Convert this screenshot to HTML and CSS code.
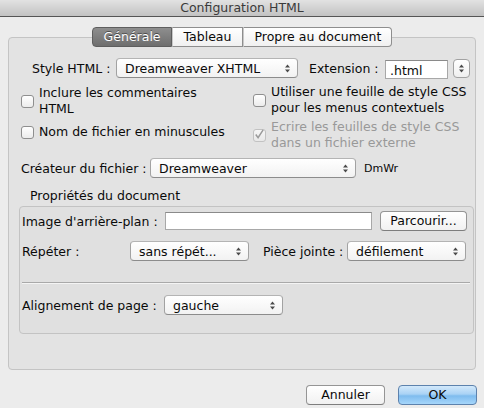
FILE: index.html
```html
<!DOCTYPE html>
<html lang="fr">
<head>
<meta charset="utf-8">
<title>Configuration HTML</title>
<link rel="stylesheet" href="styles.css">
</head>
<body>
<div class="titlebar">Configuration HTML</div>
<div class="content">
  <div class="tabs">
    <span class="tab active">Générale</span><span class="tab">Tableau</span><span class="tab">Propre au document</span>
  </div>
  <div class="panel">
    <div class="row row-style">
      <span class="lbl lbl-style">Style HTML :</span>
      <div class="popup w-style"><span class="val">Dreamweaver XHTML</span><svg class="arr" viewBox="0 0 7 11"><path d="M3.5 1.5 L6 4.5 H1Z M3.5 9.5 L6 6.5 H1Z"/></svg></div>
      <span class="lbl lbl-ext">Extension :</span>
      <div class="field w-ext">.html</div>
      <div class="stepper"><svg class="arr" viewBox="0 0 7 11"><path d="M3.5 1.5 L6 4.5 H1Z M3.5 9.5 L6 6.5 H1Z"/></svg></div>
    </div>
    <div class="checks">
      <div class="col col-left">
        <div class="check"><span class="box"></span><span class="ctext">Inclure les commentaires<br>HTML</span></div>
        <div class="check"><span class="box"></span><span class="ctext">Nom de fichier en minuscules</span></div>
      </div>
      <div class="col col-right">
        <div class="check"><span class="box"></span><span class="ctext">Utiliser une feuille de style CSS<br>pour les menus contextuels</span></div>
        <div class="check disabled"><span class="box checked"><svg viewBox="0 0 13 13"><path d="M3 6.5 L5.5 10 L11 1.5" fill="none" stroke="#9a9a9a" stroke-width="1.6"/></svg></span><span class="ctext">Ecrire les feuilles de style CSS<br>dans un fichier externe</span></div>
      </div>
    </div>
    <div class="row row-creator">
      <span class="lbl lbl-creator">Créateur du fichier :</span>
      <div class="popup w-creator"><span class="val">Dreamweaver</span><svg class="arr" viewBox="0 0 7 11"><path d="M3.5 1.5 L6 4.5 H1Z M3.5 9.5 L6 6.5 H1Z"/></svg></div>
      <span class="code">DmWr</span>
    </div>
    <div class="legend">Propriétés du document</div>
    <div class="group">
      <div class="row row-image">
        <span class="lbl lbl-image">Image d'arrière-plan :</span>
        <div class="field w-image"></div>
        <div class="button w-browse">Parcourir...</div>
      </div>
      <div class="row row-repeat">
        <span class="lbl lbl-repeat">Répéter :</span>
        <div class="popup w-small"><span class="val">sans répét...</span><svg class="arr" viewBox="0 0 7 11"><path d="M3.5 1.5 L6 4.5 H1Z M3.5 9.5 L6 6.5 H1Z"/></svg></div>
        <span class="lbl lbl-attach">Pièce jointe :</span>
        <div class="popup w-small"><span class="val">défilement</span><svg class="arr" viewBox="0 0 7 11"><path d="M3.5 1.5 L6 4.5 H1Z M3.5 9.5 L6 6.5 H1Z"/></svg></div>
      </div>
      <div class="separator"></div>
      <div class="row row-align">
        <span class="lbl lbl-align">Alignement de page :</span>
        <div class="popup w-small"><span class="val">gauche</span><svg class="arr" viewBox="0 0 7 11"><path d="M3.5 1.5 L6 4.5 H1Z M3.5 9.5 L6 6.5 H1Z"/></svg></div>
      </div>
    </div>
  </div>
  <div class="actions">
    <div class="button w-btn">Annuler</div>
    <div class="button default w-btn">OK</div>
  </div>
</div>
</body>
</html>
```
FILE: styles.css
```css
* { box-sizing: border-box; }
html, body { margin: 0; padding: 0; }
body {
  background: #ececec;
  font-family: "DejaVu Sans", "Noto Sans", sans-serif;
  font-size: 12.5px;
  color: #0a0a0a;
  width: 484px;
  height: 408px;
  overflow: hidden;
}
.titlebar {
  height: 17px;
  line-height: 16px;
  text-align: center;
  font-size: 12.5px;
  color: #3a3a3a;
  background: linear-gradient(#e2e2e2, #c2c2c2);
  border-bottom: 1px solid #555;
}
.content { padding-top: 10px; }
.tabs {
  display: flex;
  justify-content: center;
  position: relative;
  z-index: 1;
  height: 20px;
  margin-bottom: -10px;
}
.tab {
  height: 20px;
  line-height: 18px;
  padding: 0 11px;
  border: 1px solid #8e8e8e;
  border-left: 1px solid #c8c8c8;
  background: linear-gradient(#ffffff, #f0f0f0);
  font-size: 12.5px;
}
.tab:first-child { border-left: 1px solid #6a6a6a; border-radius: 4px 0 0 4px; }
.tab:last-child { border-radius: 0 4px 4px 0; padding: 0 10px; }
.tab.active {
  background: linear-gradient(#8e8e8e, #6e6e6e);
  border-color: #5e5e5e;
  color: #fff;
  text-shadow: 0 -1px 0 rgba(0,0,0,.45);
  padding: 0 10px 0 11px;
}
.panel {
  margin: 0 8px;
  height: 333px;
  border: 1px solid #c4c4c4;
  border-radius: 4px;
  background: #e3e3e3;
  padding: 20px 1px 0 10px;
}
.row { display: flex; align-items: center; height: 20px; padding-left: 2px; }
.lbl { white-space: nowrap; }
.row-style { padding-left: 13px; }
.lbl-style { width: 84px; }
.lbl-ext { width: 76px; margin-left: 11px; }
.popup {
  display: flex;
  align-items: center;
  height: 20px;
  border: 1px solid #a2a2a2;
  border-top-color: #b4b4b4;
  border-bottom-color: #8c8c8c;
  border-radius: 4px;
  background: linear-gradient(#ffffff, #f2f2f2);
  padding: 0 6px 0 8px;
  white-space: nowrap;
}
.popup .val { flex: 1; }
.arr { width: 7px; height: 11px; fill: #4a4a4a; flex: none; }
.w-style { width: 182px; }
.w-creator { width: 206px; }
.w-small { width: 119px; }
.field {
  height: 19px;
  background: #fff;
  border: 1px solid #a8a8a8;
  border-top-color: #8a8a8a;
  padding: 1px 4px 0;
  line-height: 17px;
}
.w-ext { width: 63px; margin-top: 2px; }
.stepper {
  width: 17px;
  height: 19px;
  margin-left: 5px;
  border: 1px solid #a2a2a2;
  border-radius: 4px;
  background: linear-gradient(#ffffff, #efefef);
  display: flex;
  align-items: center;
  justify-content: center;
}
.checks { display: flex; margin-top: 7px; padding-left: 2px; }
.col { display: flex; flex-direction: column; }
.col-left { width: 232px; gap: 7px; }
.col-right { gap: 3px; margin-top: -1px; }
.check { display: flex; align-items: center; line-height: 16px; }
.box {
  width: 13px;
  height: 13px;
  flex: none;
  margin-right: 5px;
  border: 1px solid #8f8f8f;
  border-radius: 3px;
  background: linear-gradient(#ffffff, #ececec);
  display: flex;
}
.box svg { width: 13px; height: 13px; margin: -2px 0 0 -1px; }
.disabled { color: #999; }
.disabled .box { border-color: #c2c2c2; background: linear-gradient(#f6f6f6, #e8e8e8); }
.row-creator { margin-top: 7px; }
.lbl-creator { width: 129px; }
.code { margin-left: 8px; font-size: 11px; }
.legend { height: 16px; line-height: 16px; margin-top: 10px; padding-left: 11px; }
.group {
  margin-top: 2px;
  height: 128px;
  border: 1px solid #c3c3c3;
  border-radius: 4px;
  background: #e0e0e0;
  padding: 4px 0 0 0;
}
.lbl-image { width: 143px; }
.w-image { width: 207px; height: 18px; }
.button {
  height: 20px;
  line-height: 18px;
  text-align: center;
  border: 1px solid #959595;
  border-bottom-color: #7e7e7e;
  border-radius: 4px;
  background: linear-gradient(#ffffff, #f1f1f1);
  white-space: nowrap;
}
.w-browse { width: 87px; margin-left: 8px; }
.row-repeat { margin-top: 10px; }
.lbl-repeat { width: 108px; }
.lbl-attach { width: 84px; margin-left: 14px; }
.separator {
  height: 1px;
  background: #a9a9a9;
  margin: 21px 3px 0 2px;
  box-shadow: 0 1px 0 #f4f4f4;
}
.row-align { margin-top: 12px; }
.lbl-align { width: 142px; }
.actions {
  display: flex;
  justify-content: flex-end;
  gap: 13px;
  margin: 15px 7px 0 0;
}
.w-btn { width: 79px; }
.button.default {
  border-color: #5d82ad;
  background: linear-gradient(#d3e9fb 0%, #a9d2f5 45%, #7fbcee 55%, #a6d6fb 100%);
}
```
